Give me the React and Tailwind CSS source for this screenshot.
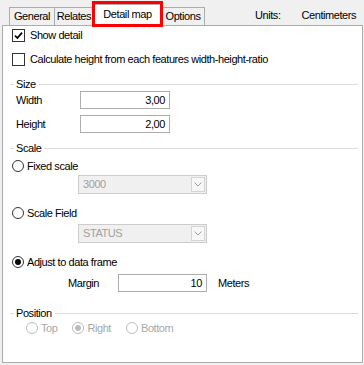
import React from "react";

function Check({ checked }) {
  return (
    <span className="w-[13px] h-[13px] border border-[#333333] bg-white flex items-center justify-center shrink-0">
      {checked && (
        <svg width="9" height="9" viewBox="0 0 9 9">
          <path d="M1 4.6 L3.4 7 L8 1.6" stroke="#000" strokeWidth="1.7" fill="none" />
        </svg>
      )}
    </span>
  );
}

function Radio({ checked, disabled }) {
  return (
    <span
      className={
        "w-[12px] h-[12px] rounded-full border bg-white flex items-center justify-center shrink-0 " +
        (disabled ? "border-[#bcbcbc]" : "border-[#333333]")
      }
    >
      {checked && (
        <span
          className={
            "w-[6px] h-[6px] rounded-full " + (disabled ? "bg-[#bcbcbc]" : "bg-[#000000]")
          }
        />
      )}
    </span>
  );
}

function GroupHeader({ label, className }) {
  return (
    <div className={"flex items-center h-[14px] " + className}>
      <div className="ml-[7px] w-[4px] h-px bg-[#dcdcdc]" />
      <span className="ml-[2px]">{label}</span>
      <div className="ml-[3px] mr-[4px] flex-1 h-px bg-[#dcdcdc]" />
    </div>
  );
}

function Select({ value, className }) {
  return (
    <div
      className={
        "ml-[75px] w-[129px] h-[19px] border border-[#cccccc] bg-[#f0f0f0] flex items-center justify-between pl-[4px] pr-[1px] text-[#a0a0a0] " +
        className
      }
    >
      <span>{value}</span>
      <div className="w-[14px] h-[15px] border border-[#d4d4d4] bg-[#f7f7f7] flex items-center justify-center">
        <svg width="8" height="5" viewBox="0 0 8 5">
          <path d="M0.5 0.5 L4 4 L7.5 0.5" stroke="#a0a0a0" strokeWidth="1" fill="none" />
        </svg>
      </div>
    </div>
  );
}

function Tab({ label, className }) {
  return (
    <div
      className={
        "h-[18px] border border-b-0 border-[#acacac] bg-[#f0f0f0] flex items-center justify-center -ml-px " +
        className
      }
    >
      {label}
    </div>
  );
}

export default function App() {
  return (
    <div className="w-[364px] h-[365px] bg-[#f0f0f0] font-['Liberation_Sans',Arial,sans-serif] text-[11px] tracking-[-0.43px] text-black leading-none overflow-hidden">
      {/* Tab strip */}
      <div className="flex h-[25px]">
        <div className="flex items-end h-full pl-[10px]">
          <Tab label="General" className="w-[46px]" />
          <Tab label="Relates" className="w-[40px]" />
          <div className="relative z-10 -ml-px -mb-px h-[22px] w-[69px] border border-b-0 border-[#acacac] bg-white flex items-center justify-center pb-[2px]">
            Detail map
            <div className="absolute -left-[2px] -right-[2px] -top-[4px] -bottom-[1px] border-[3px] border-[#ff0000]" />
          </div>
          <Tab label="Options" className="w-[44px]" />
        </div>
        <div className="flex items-center h-full pt-[5px] ml-[50px]">
          <span>Units:</span>
          <span className="ml-[21px]">Centimeters</span>
        </div>
      </div>

      {/* Panel */}
      <div className="ml-[2px] w-[361px] h-[338px] border border-[#acacac] bg-white flex flex-col">
        <div className="flex items-center h-[13px] mt-[3px] ml-[9px]">
          <Check checked />
          <span className="ml-[5px]">Show detail</span>
        </div>
        <div className="flex items-center h-[13px] mt-[11px] ml-[9px]">
          <Check />
          <span className="ml-[5px]">Calculate height from each features width-height-ratio</span>
        </div>

        <GroupHeader label="Size" className="mt-[11px]" />
        <div className="flex items-center h-[18px] ml-[13px]">
          <span className="w-[64px]">Width</span>
          <div className="w-[90px] h-[18px] border border-[#adadad] bg-white flex items-center justify-end pr-[4px]">
            3,00
          </div>
        </div>
        <div className="flex items-center h-[18px] mt-[6px] ml-[13px]">
          <span className="w-[64px]">Height</span>
          <div className="w-[90px] h-[18px] border border-[#adadad] bg-white flex items-center justify-end pr-[4px]">
            2,00
          </div>
        </div>

        <GroupHeader label="Scale" className="mt-[8px]" />
        <div className="flex items-center h-[14px] mt-[4px] ml-[9px]">
          <Radio />
          <span className="ml-[3px]">Fixed scale</span>
        </div>
        <Select value="3000" className="mt-[2px]" />
        <div className="flex items-center h-[14px] mt-[12px] ml-[9px]">
          <Radio />
          <span className="ml-[3px]">Scale Field</span>
        </div>
        <Select value="STATUS" className="mt-[4px]" />
        <div className="flex items-center h-[14px] mt-[12px] ml-[9px]">
          <Radio checked />
          <span className="ml-[3px]">Adjust to data frame</span>
        </div>
        <div className="flex items-center h-[18px] mt-[5px] ml-[65px]">
          <span className="w-[50px]">Margin</span>
          <div className="w-[89px] h-[18px] border border-[#adadad] bg-white flex items-center justify-end pr-[4px]">
            10
          </div>
          <span className="ml-[11px]">Meters</span>
        </div>

        <GroupHeader label="Position" className="mt-[14px]" />
        <div className="flex items-center h-[14px] mt-[1px] ml-[23px] text-[#a8a8a8]">
          <Radio disabled />
          <span className="ml-[3px]">Top</span>
          <span className="ml-[15px]" />
          <Radio disabled checked />
          <span className="ml-[3px]">Right</span>
          <span className="ml-[15px]" />
          <Radio disabled />
          <span className="ml-[3px]">Bottom</span>
        </div>
      </div>
    </div>
  );
}
